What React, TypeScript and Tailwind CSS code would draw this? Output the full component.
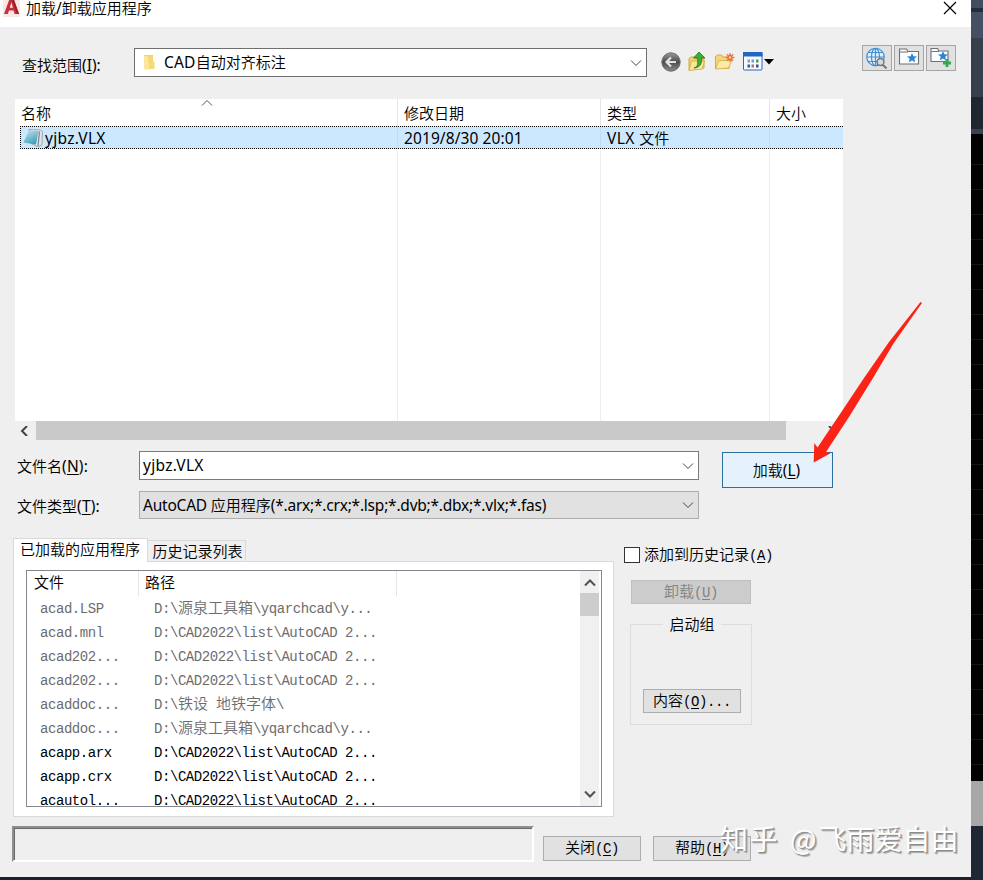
import type { ReactNode } from "react";
import clsx from "clsx";

interface LoadedApp {
    file: string;
    path: string;
    dim?: boolean;
}

const apps: LoadedApp[] = [
    { file: "acad.LSP", path: "D:\\源泉工具箱\\yqarchcad\\y...", dim: true },
    { file: "acad.mnl", path: "D:\\CAD2022\\list\\AutoCAD 2...", dim: true },
    { file: "acad202...", path: "D:\\CAD2022\\list\\AutoCAD 2...", dim: true },
    { file: "acad202...", path: "D:\\CAD2022\\list\\AutoCAD 2...", dim: true },
    { file: "acaddoc...", path: "D:\\铁设 地铁字体\\", dim: true },
    { file: "acaddoc...", path: "D:\\源泉工具箱\\yqarchcad\\y...", dim: true },
    { file: "acapp.arx", path: "D:\\CAD2022\\list\\AutoCAD 2..." },
    { file: "acapp.crx", path: "D:\\CAD2022\\list\\AutoCAD 2..." },
    { file: "acautol...", path: "D:\\CAD2022\\list\\AutoCAD 2..." },
];

// "&X" marks the access key, as in a Windows resource file
function Label({ text, mono = false, tracking }: { text: string; mono?: boolean; tracking?: string }) {
    const latin = mono
        ? "font-['Liberation_Mono',monospace] font-normal text-[14px] tracking-[-0.44px]"
        : clsx("font-['Noto_Sans','Open_Sans',sans-serif] font-normal text-[15.5px]", tracking);
    const parts = text.split(/(&.|[\x20-\x25\x27-\x7e]+)/).filter(Boolean);
    return (
        <span className="whitespace-pre">
            {parts.map((p, i) => {
                if (p[0] === "&") {
                    return <span key={i} className={clsx(latin, "underline underline-offset-2 decoration-1")}>{p.slice(1)}</span>;
                }
                return <span key={i} className={p.charCodeAt(0) < 127 ? latin : ""}>{p}</span>;
            })}
        </span>
    );
}

function Chevron({ dir, className }: { dir: "up" | "down" | "left"; className?: string }) {
    const d = { up: "M1 6.5 6 1.5 11 6.5", down: "M1 2.5 6 7.5 11 2.5", left: "M8 0 3 5 8 10" }[dir];
    return (
        <svg width="12" height="10" viewBox="0 0 12 10" fill="none" stroke="currentColor" className={className}>
            <path d={d} />
        </svg>
    );
}

function Button({ children, className }: { children: ReactNode; className?: string }) {
    return (
        <button className={clsx("flex items-center justify-center border leading-none", className)}>{children}</button>
    );
}

function AutocadIcon() {
    return (
        <svg width="17" height="19" viewBox="0 0 17 19">
            <rect width="17" height="19" fill="#fbe6e4" />
            <path d="M1 16 6.500 1h4.200L16 16h-4.400l-1-3.400H6L4.800 16z" fill="#c5303a" />
            <path d="M6.800 9.800 8.400 4.600l1.500 5.200z" fill="#fbe6e4" />
            <path d="M10.700 1 16 16h-2.200L8.600 1z" fill="#98202a" />
        </svg>
    );
}

function BackIcon() {
    return (
        <svg width="20" height="20" viewBox="0 0 20 20">
            <defs>
                <linearGradient id="back" x1="0" y1="0" x2="0" y2="1">
                    <stop offset="0" stopColor="#9a9a9a" />
                    <stop offset="0.5" stopColor="#4c4c4c" />
                    <stop offset="1" stopColor="#8c8c8c" />
                </linearGradient>
            </defs>
            <circle cx="10" cy="10" r="9.2" fill="url(#back)" stroke="#6a6a6a" />
            <path d="M15 10H6M10 5.5 5.5 10l4.5 4.5" fill="none" stroke="#e4e4e4" strokeWidth="2.2" />
        </svg>
    );
}

function UpFolderIcon() {
    return (
        <svg width="19" height="21" viewBox="0 0 19 21">
            <path d="M1 19V7.5L3 6h4l1 1.5h8V17z" fill="#f0d272" stroke="#cfa94a" />
            <path d="M1 19.5 3.5 10h13l-2.2 8z" fill="#fbe596" stroke="#d8b454" />
            <path d="M6 17c4-1.5 4-4 3.500-10H5.500L11 1l6 6h-3.500c.5 6-1.500 9.500-7.500 10z" fill="#3fae35" stroke="#1f7c1c" strokeWidth=".8" />
        </svg>
    );
}

function NewFolderIcon() {
    return (
        <svg width="21" height="19" viewBox="0 0 21 19">
            <path d="M1.5 16.5v-12L3.500 3h4L9 5h6v11.500z" fill="#f4d67a" stroke="#d3ac4e" />
            <path d="M1.5 17 5 8.500h13L14.500 16z" fill="#fdeaa4" stroke="#dbb758" />
            <path d="M16 1v9M11.500 5.500h9M12.800 2.300l6.400 6.400M19.200 2.300l-6.400 6.400" stroke="#f07a4c" strokeWidth="1.400" />
            <circle cx="16" cy="5.500" r="2" fill="#fbd27a" stroke="#e85224" />
        </svg>
    );
}

function ViewIcon() {
    return (
        <svg width="20" height="19" viewBox="0 0 20 19">
            <rect x=".5" y=".5" width="18.500" height="17.500" rx="1" fill="#f6f9fe" stroke="#2f65b5" />
            <path d="M0 0h19.500v4.500H0z" fill="#1f68c4" />
            <path d="M4.500 7.500h2.500v3H4.500z" fill="#8c9cba" />
            <path d="M8.500 7.500h2.500v3H8.500z" fill="#6f9ade" />
            <path d="M13 7.500h2.500v3H13z" fill="#45a147" />
            <path d="M4.500 12.500h2.500v3H4.500z" fill="#34589e" />
            <path d="M8.500 12.500h2.500v3H8.500z" fill="#b07070" />
            <path d="M13 12.500h2.500v3H13z" fill="#2c4b9a" />
        </svg>
    );
}

function GlobeIcon() {
    return (
        <svg width="22" height="22" viewBox="0 0 22 22" fill="none" className="-ml-0.5">
            <g stroke="#3f8fd2" strokeWidth="1.200">
                <circle cx="10.500" cy="10" r="8.700" fill="#e3f0fa" />
                <ellipse cx="10.500" cy="10" rx="4" ry="8.700" />
                <path d="M10.500 1.300v17.400M1.800 10h17.400M3.200 5.500h14.600M3.200 14.500h14.600" />
            </g>
            <path d="m17.500 17.500 4 4" stroke="#777" strokeWidth="2" />
            <circle cx="15.500" cy="15" r="3.400" fill="#cfdde8" stroke="#777" strokeWidth="1.500" />
        </svg>
    );
}

function StarFolderIcon({ plus = false }: { plus?: boolean }) {
    return (
        <svg width="22" height="22" viewBox="0 0 22 22" className="-mt-1">
            <path
                d={plus ? "M1 16.500V3.500h6.500L9 6h9v10.500z" : "M1.500 19V4h7L10 6.500h10.500V19z"}
                fill="#fbfdff"
                stroke="#6c7176"
                strokeWidth="1.100"
            />
            <path d={plus ? "M1.500 6.500H9" : "M2 7h8"} stroke="#6c7176" />
            <path
                transform={plus ? "translate(-1 -1)" : "translate(0 1)"}
                d="m14 7 1.400 3.200 3.600.3-2.700 2.300.8 3.500L14 14.400l-3.100 1.900.8-3.500L9 10.500l3.600-.3z"
                fill="#2c86d3"
            />
            {plus && <path d="M17 14v8M13 18h8" stroke="#35a853" strokeWidth="2.800" />}
        </svg>
    );
}

function FolderIcon() {
    return (
        <svg width="14" height="17" viewBox="0 0 14 17">
            <path d="M2 1h9v7H2z" fill="#f2cf62" />
            <path d="M2 1.500 6.500 2.500V16L2 15z" fill="#fbe69a" />
            <path d="M6.500 7.500h6V15h-6z" fill="#f7d978" />
            <path d="M6.500 2h4.500v5.500H6.500z" fill="#f5d874" />
        </svg>
    );
}

function NotebookIcon() {
    return (
        <svg width="21" height="20" viewBox="0 0 21 20">
            <defs>
                <linearGradient id="cover" x1="0" y1="0" x2=".6" y2="1">
                    <stop offset="0" stopColor="#c3e6ee" />
                    <stop offset="1" stopColor="#3f9dba" />
                </linearGradient>
            </defs>
            <path d="m6 1.500 11.500.5 2 1.500-.5 13-3.500 2.500L7 15z" fill="#dfe5e7" stroke="#8f9698" strokeWidth=".8" />
            <path d="M5.500 3 15.500 3 13 16.500.500 14.500z" fill="url(#cover)" />
            <path d="M16.500 3.500 15 18" stroke="#7d8486" strokeWidth="1.200" />
        </svg>
    );
}

function FileList() {
    return (
        <div className="ml-[15px] w-[828px]">
            <div className="relative grid h-[322px] grid-cols-[383px_203px_169px_73px] grid-rows-[27px_24px_1fr] bg-white">
                <div className="border-r border-[#e5e5e5] pl-1.5 pt-1"><Label text="名称" /></div>
                <div className="border-r border-[#e5e5e5] pl-1.5 pt-1"><Label text="修改日期" /></div>
                <div className="border-r border-[#e5e5e5] pl-1.5 pt-1"><Label text="类型" /></div>
                <div className="pl-1.5 pt-1"><Label text="大小" /></div>

                <div className="col-span-4 ml-[5px] grid h-[23px] grid-cols-[376px_203px_169px_74px] items-center border border-r-0 border-dotted border-black bg-[#cce8ff]">
                    <div className="flex items-center pl-0.5">
                        <NotebookIcon />
                        <span className="pl-px"><Label text="yjbz.VLX" tracking="tracking-[0.3px]" /></span>
                    </div>
                    <div className="h-full border-l border-[#c0dcf3] pl-1.5 pt-px"><Label text="2019/8/30 20:01" tracking="tracking-[0.1px]" /></div>
                    <div className="h-full border-l border-[#c0dcf3] pl-1.5 pt-px"><Label text="VLX 文件" tracking="tracking-[0.4px]" /></div>
                    <div className="h-full border-l border-[#c0dcf3]" />
                </div>

                <div className="border-r border-[#ededed]" />
                <div className="border-r border-[#ededed]" />
                <div className="border-r border-[#ededed]" />
                <div />
                <Chevron dir="up" className="absolute left-[186px] top-0 text-[#555]" />
            </div>
            <div className="flex h-[19px] items-center bg-[#efefef]">
                <Chevron dir="left" className="mx-[4px] mr-[5px] stroke-2 text-[#444]" />
                <div className="h-[19px] w-[750px] bg-[#c9c9c9]" />
                <Chevron dir="left" className="ml-[39px] -scale-x-100 stroke-2 text-[#444]" />
            </div>
        </div>
    );
}

function LoadedPanel() {
    return (
        <div className="w-[601px]">
            <div className="flex h-[23px] items-end">
                <div className="z-10 -mb-px flex h-6 w-[135px] items-start justify-center border border-b-0 border-[#d9d9d9] bg-white pr-px">
                    <Label text="已加载的应用程序" mono />
                </div>
                <div className="flex h-[21px] w-[98px] items-center justify-center border border-b-0 border-l-0 border-[#d9d9d9] pl-0.5">
                    <Label text="历史记录列表" mono />
                </div>
            </div>
            <div className="h-[256px] border border-[#d9d9d9] bg-white pl-3 pt-2">
                <div className="flex h-[237px] w-[576px] border border-[#828790]">
                    <div className="flex-1 overflow-hidden">
                        <div className="flex h-[25px] items-center">
                            <div className="h-full w-[112px] border-r border-[#e5e5e5] pl-[7px] pt-px"><Label text="文件" mono /></div>
                            <div className="h-full w-[258px] border-r border-[#e5e5e5] pl-1.5 pt-px"><Label text="路径" mono /></div>
                        </div>
                        {apps.map((app, i) => (
                            <div key={i} className={clsx("flex h-6 items-center pl-[13px]", app.dim ? "text-[#6d6d6d]" : "text-black")}>
                                <div className="w-[114px]"><Label text={app.file} mono /></div>
                                <Label text={app.path} mono />
                            </div>
                        ))}
                    </div>
                    <div className="mr-0.5 flex w-[19px] flex-col items-center bg-[#f0f0f0] pb-[7px] pt-2">
                        <Chevron dir="up" className="stroke-2 text-[#505050]" />
                        <div className="mt-1 h-[23px] w-full bg-[#cdcdcd]" />
                        <Chevron dir="down" className="mt-auto stroke-2 text-[#505050]" />
                    </div>
                </div>
            </div>
        </div>
    );
}

function Backdrop() {
    const lines = Array.from({ length: 26 }, (_, i) => i);
    return (
        <div className="flex w-3 flex-col">
            <div className="h-2 bg-[#434d60]" />
            <div className="h-1 bg-[#262d39]" />
            <div className="h-[26px] bg-[#465065]" />
            <div className="h-[59px] bg-[#373f4c]" />
            <div className="h-8 bg-[#1f2630]" />
            <div className="h-[5px] bg-[#3b414d]" />
            <div className="h-[647px] overflow-hidden bg-black pt-1.5">
                {lines.map((i) => <div key={i} className="h-[25px] border-b border-[#161616]" />)}
            </div>
            <div className="h-[45px] bg-[#a7a7a7]" />
            <div className="flex-1 bg-[#1f2634]" />
        </div>
    );
}

export default function App() {
    const gray = "border-[#adadad] bg-[#e1e1e1]";
    return (
        <div className="relative flex h-[880px] w-[983px] overflow-hidden bg-[#1b212b] font-['Noto_Sans_CJK_SC',sans-serif] text-[15px] font-[350] leading-5 text-black">
            <div className="flex h-[877px] w-[971px] flex-col bg-[#efefef]">
                <header className="flex h-[27px] items-start bg-white pl-[3px]">
                    <div className="-mt-0.5"><AutocadIcon /></div>
                    <span className="pl-1.5 leading-4"><Label text="加载/卸载应用程序" /></span>
                    <svg width="14" height="14" viewBox="0 0 14 14" stroke="black" strokeWidth="1.200" className="ml-auto mr-[14px] mt-px">
                        <path d="m1 1 12 12M13 1 1 13" />
                    </svg>
                </header>

                <div className="flex h-[72px] items-start pl-[22px] pt-[18px]">
                    <span className="w-[112px] pt-2.5"><Label text="查找范围(&I):" /></span>
                    <div className="mt-[3px] flex h-[29px] w-[513px] items-center border border-[#6f6f6f] bg-white pl-[7px] pr-1">
                        <FolderIcon />
                        <span className="pb-0.5 pl-2"><Label text="CAD自动对齐标注" tracking="tracking-[0.2px]" /></span>
                        <Chevron dir="down" className="ml-auto text-[#444]" />
                    </div>
                    <div className="ml-3.5 mt-1.5 flex h-[21px] items-center">
                        <BackIcon />
                        <span className="ml-[7px]"><UpFolderIcon /></span>
                        <span className="ml-[7px]"><NewFolderIcon /></span>
                        <span className="ml-2"><ViewIcon /></span>
                        <svg width="10" height="6" viewBox="0 0 10 6" className="ml-px"><path d="M0 0h10L5 5.500z" /></svg>
                    </div>
                    <div className="ml-auto mr-[15px] flex gap-0.5">
                        <Button className="h-[26px] w-[30px] border-[#a5a5a5] bg-[#e1e1e1]"><GlobeIcon /></Button>
                        <Button className="h-[26px] w-[30px] border-[#a5a5a5] bg-[#e1e1e1]"><StarFolderIcon /></Button>
                        <Button className="h-[26px] w-[30px] border-[#a5a5a5] bg-[#e1e1e1]"><StarFolderIcon plus /></Button>
                    </div>
                </div>

                <FileList />

                <div className="flex h-[98px] pl-[17px] pt-[11px]">
                    <div className="flex flex-col gap-[11px]">
                        <div className="flex h-[29px] items-center">
                            <span className="w-[122px]"><Label text="文件名(&N):" tracking="tracking-[0.2px]" /></span>
                            <div className="flex h-full w-[560px] items-center border border-[#7a7a7a] bg-white pl-[3px] pr-1">
                                <span className="pb-0.5"><Label text="yjbz.VLX" tracking="tracking-[0.3px]" /></span>
                                <Chevron dir="down" className="ml-auto text-[#444]" />
                            </div>
                        </div>
                        <div className="flex h-7 items-center">
                            <span className="w-[122px] pt-0.5"><Label text="文件类型(&T):" tracking="tracking-[0.2px]" /></span>
                            <div className="flex h-full w-[560px] items-center border border-[#adadad] bg-[#e1e1e1] pl-[3px] pr-1">
                                <Label text="AutoCAD 应用程序(*.arx;*.crx;*.lsp;*.dvb;*.dbx;*.vlx;*.fas)" tracking="tracking-[-0.22px]" />
                                <Chevron dir="down" className="ml-auto text-[#444]" />
                            </div>
                        </div>
                    </div>
                    <Button className="ml-[23px] mt-px h-9 w-[111px] border-[#2c6f9f] bg-[#e5f1fb] pr-0.5"><Label text="加载(&L)" /></Button>
                </div>

                <div className="flex h-[288px] pl-[13px]">
                    <LoadedPanel />
                    <div className="ml-2.5 pt-[9px]">
                        <label className="flex h-4 items-center gap-1">
                            <span className="h-4 w-4 border border-[#333] bg-white" />
                            <Label text="添加到历史记录(&A)" mono />
                        </label>
                        <Button className="ml-[7px] mt-[17px] h-6 w-[120px] border-[#bfbfbf] bg-[#cccccc] pb-0.5 text-[#838383]"><Label text="卸载(&U)" mono /></Button>
                        <div className="ml-1.5 mt-5 flex h-[101px] w-[122px] flex-col items-center border border-[#dcdcdc]">
                            <span className="-mt-[11px] ml-0.5 bg-[#efefef] px-1.5"><Label text="启动组" mono /></span>
                            <Button className={clsx("mb-[11px] ml-0.5 mt-auto h-6 w-[98px] pb-0.5", gray)}><Label text="内容(&O)..." mono /></Button>
                        </div>
                    </div>
                </div>

                <footer className="flex pl-[12px]">
                    <div className="h-9 w-[522px] border-2 border-b-white border-l-[#8f8f8f] border-r-white border-t-[#8f8f8f]">
                        <div className="h-full border-l border-t border-[#696969]" />
                    </div>
                    <Button className={clsx("ml-[9px] mt-2.5 h-[25px] w-[98px] pb-0.5", gray)}><Label text="关闭(&C)" mono /></Button>
                    <Button className={clsx("ml-3 mt-2.5 h-[25px] w-[98px] pb-0.5", gray)}><Label text="帮助(&H)" mono /></Button>
                </footer>
            </div>
            <Backdrop />

            {/* pointer to the load button */}
            <svg width="983" height="880" viewBox="0 0 983 880" className="pointer-events-none absolute inset-0">
                <path d="M920.500 302 889 342 864 378 838 417 817.500 447.500 814.300 443 813.700 462.500 830.500 453.300 826 452 849 417 873 378 893.500 343.500 922 303z" fill="#fb2316" />
            </svg>
            <div className="absolute left-[720px] top-[818px] flex gap-[11px] whitespace-pre text-[28px] font-normal leading-10 text-white [text-shadow:1px_1px_1px_#888,2px_2px_1px_#aaa]">
                <span className="tracking-[1.5px]">知乎</span>
                <span>@<span className="pl-0.5">飞雨爱自由</span></span>
            </div>
        </div>
    );
}
